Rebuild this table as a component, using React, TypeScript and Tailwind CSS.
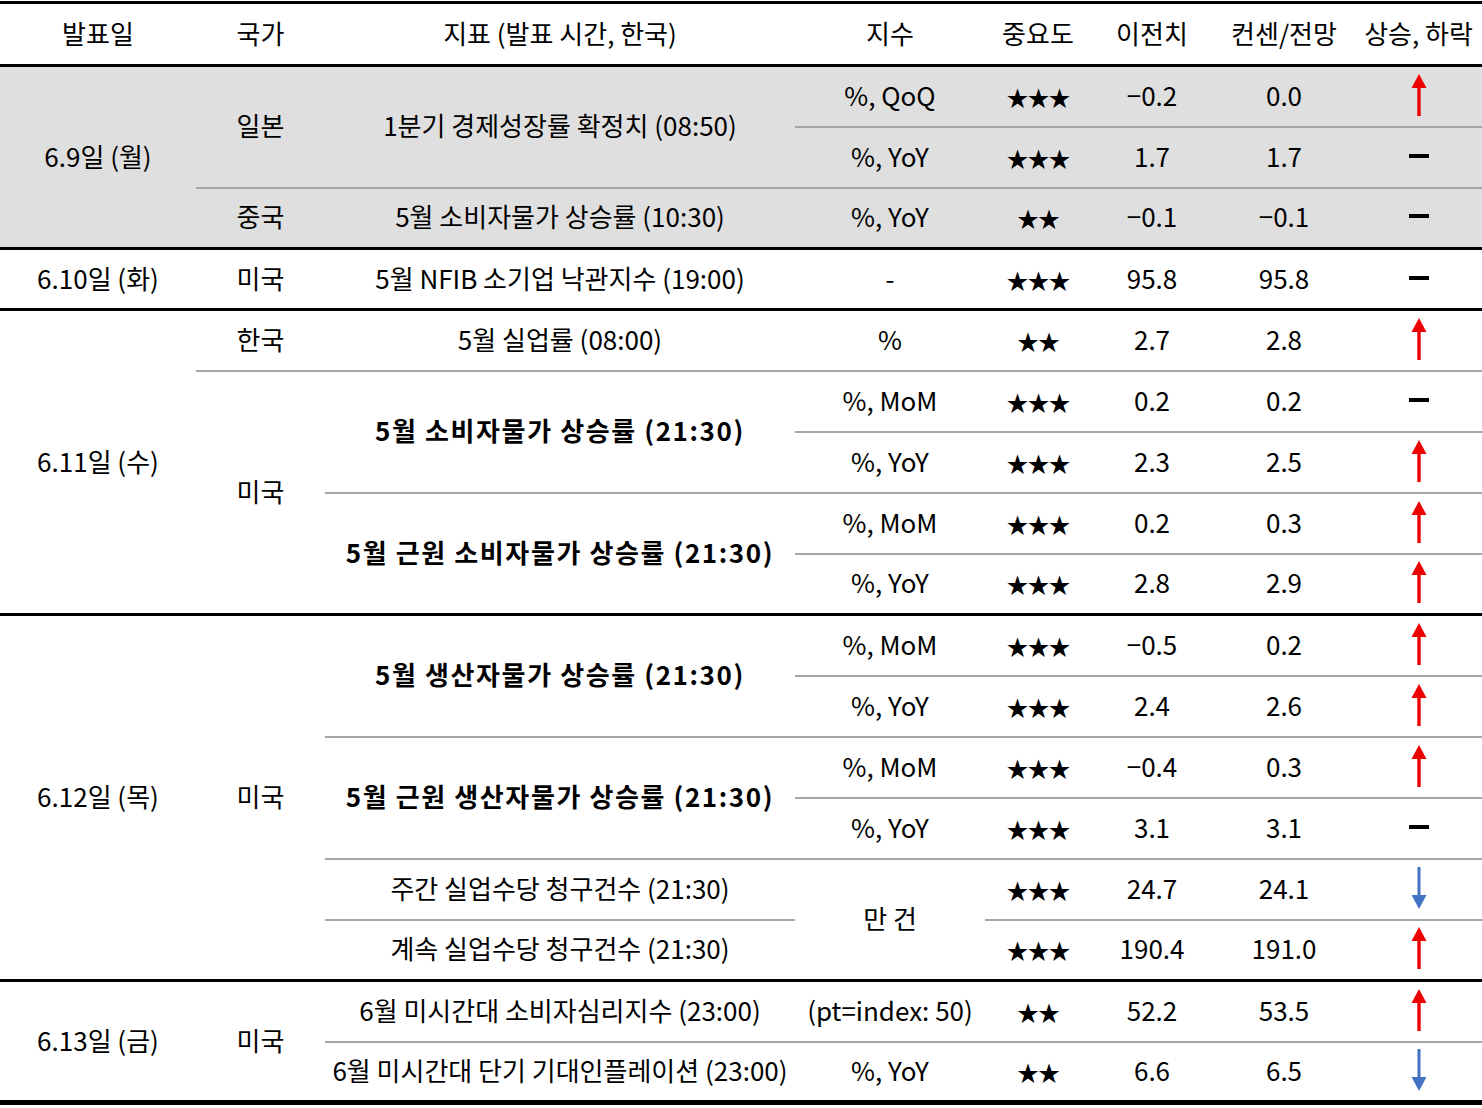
import React from "react";

type Border = "thin" | "thick" | "bottom" | "none";

const borderCls: Record<Border, string> = {
  thin: "border-b-2 border-b-[#a6a6a6]",
  thick: "border-b-[3px] border-b-black",
  bottom: "border-b-[5px] border-b-black",
  none: "",
};

interface TdProps {
  children?: React.ReactNode;
  rs?: number;
  b?: Border;
  bold?: boolean;
}

const Td = ({ children, rs, b = "none", bold }: TdProps) => (
  <td
    rowSpan={rs}
    className={`p-0 pb-[3px] text-center align-middle whitespace-nowrap ${borderCls[b]} ${bold ? "font-bold tracking-[1.6px]" : ""}`}
  >
    {children}
  </td>
);

const Up = () => (
  <svg width="16" height="42" viewBox="0 0 16 42" className="mx-auto block">
    <rect x="6.3" y="11" width="3.4" height="31" fill="#ee0000" />
    <polygon points="8,0 15.5,14 0.5,14" fill="#ee0000" />
  </svg>
);

const Down = () => (
  <svg width="16" height="42" viewBox="0 0 16 42" className="mx-auto block">
    <rect x="6.5" y="0" width="3" height="31" fill="#4472c4" />
    <polygon points="8,42 15.5,28 0.5,28" fill="#4472c4" />
  </svg>
);

const Flat = () => <div className="mx-auto h-[4px] w-[20px] bg-black" />;

const Stars = ({ n }: { n: number }) => (
  <span className="text-[22px] tracking-[-1px]">{"★".repeat(n)}</span>
);

type Trend = "up" | "down" | "flat";
const trendIcon = (t: Trend) => (t === "up" ? <Up /> : t === "down" ? <Down /> : <Flat />);

// 지수 ~ 상승,하락 cells (unit column left out when spanned by a previous row)
const Vals = ({
  unit,
  stars,
  prev,
  cons,
  trend,
  b,
}: {
  unit?: string;
  stars: number;
  prev: string;
  cons: string;
  trend: Trend;
  b: Border;
}) => (
  <>
    {unit !== undefined && <Td b={b}>{unit}</Td>}
    <Td b={b}>
      <Stars n={stars} />
    </Td>
    <Td b={b}>{prev}</Td>
    <Td b={b}>{cons}</Td>
    <Td b={b}>{trendIcon(trend)}</Td>
  </>
);

export default function App() {
  return (
    <div className="w-[1482px] bg-white pt-[1px] text-black [font-family:'Noto_Sans_CJK_KR','Noto_Sans',sans-serif]">
      <table className="w-full table-fixed border-collapse border-t-[3px] border-t-black text-[26px] leading-none">
        <colgroup>
          <col className="w-[196px]" />
          <col className="w-[129px]" />
          <col className="w-[470px]" />
          <col className="w-[190px]" />
          <col className="w-[106px]" />
          <col className="w-[122px]" />
          <col className="w-[142px]" />
          <col className="w-[127px]" />
        </colgroup>
        <thead>
          <tr className="h-[63px]">
            {["발표일", "국가", "지표 (발표 시간, 한국)", "지수", "중요도", "이전치", "컨센/전망", "상승, 하락"].map((h) => (
              <Td key={h} b="thick">
                {h}
              </Td>
            ))}
          </tr>
        </thead>
        <tbody>
          {/* 6.9 - gray group */}
          <tr className="h-[61px] bg-[#dfdfdf]">
            <Td rs={3} b="thick">6.9일 (월)</Td>
            <Td rs={2} b="thin">일본</Td>
            <Td rs={2} b="thin">1분기 경제성장률 확정치 (08:50)</Td>
            <Vals unit="%, QoQ" stars={3} prev="−0.2" cons="0.0" trend="up" b="thin" />
          </tr>
          <tr className="h-[61px] bg-[#dfdfdf]">
            <Vals unit="%, YoY" stars={3} prev="1.7" cons="1.7" trend="flat" b="thin" />
          </tr>
          <tr className="h-[61px] bg-[#dfdfdf]">
            <Td b="thick">중국</Td>
            <Td b="thick">5월 소비자물가 상승률 (10:30)</Td>
            <Vals unit="%, YoY" stars={2} prev="−0.1" cons="−0.1" trend="flat" b="thick" />
          </tr>

          {/* 6.10 */}
          <tr className="h-[61px]">
            <Td b="thick">6.10일 (화)</Td>
            <Td b="thick">미국</Td>
            <Td b="thick">5월 NFIB 소기업 낙관지수 (19:00)</Td>
            <Vals unit="-" stars={3} prev="95.8" cons="95.8" trend="flat" b="thick" />
          </tr>

          {/* 6.11 */}
          <tr className="h-[61px]">
            <Td rs={5} b="thick">6.11일 (수)</Td>
            <Td b="thin">한국</Td>
            <Td b="thin">5월 실업률 (08:00)</Td>
            <Vals unit="%" stars={2} prev="2.7" cons="2.8" trend="up" b="thin" />
          </tr>
          <tr className="h-[61px]">
            <Td rs={4} b="thick">미국</Td>
            <Td rs={2} b="thin" bold>5월 소비자물가 상승률 (21:30)</Td>
            <Vals unit="%, MoM" stars={3} prev="0.2" cons="0.2" trend="flat" b="thin" />
          </tr>
          <tr className="h-[61px]">
            <Vals unit="%, YoY" stars={3} prev="2.3" cons="2.5" trend="up" b="thin" />
          </tr>
          <tr className="h-[61px]">
            <Td rs={2} b="thick" bold>5월 근원 소비자물가 상승률 (21:30)</Td>
            <Vals unit="%, MoM" stars={3} prev="0.2" cons="0.3" trend="up" b="thin" />
          </tr>
          <tr className="h-[61px]">
            <Vals unit="%, YoY" stars={3} prev="2.8" cons="2.9" trend="up" b="thick" />
          </tr>

          {/* 6.12 */}
          <tr className="h-[61px]">
            <Td rs={6} b="thick">6.12일 (목)</Td>
            <Td rs={6} b="thick">미국</Td>
            <Td rs={2} b="thin" bold>5월 생산자물가 상승률 (21:30)</Td>
            <Vals unit="%, MoM" stars={3} prev="−0.5" cons="0.2" trend="up" b="thin" />
          </tr>
          <tr className="h-[61px]">
            <Vals unit="%, YoY" stars={3} prev="2.4" cons="2.6" trend="up" b="thin" />
          </tr>
          <tr className="h-[61px]">
            <Td rs={2} b="thin" bold>5월 근원 생산자물가 상승률 (21:30)</Td>
            <Vals unit="%, MoM" stars={3} prev="−0.4" cons="0.3" trend="up" b="thin" />
          </tr>
          <tr className="h-[61px]">
            <Vals unit="%, YoY" stars={3} prev="3.1" cons="3.1" trend="flat" b="thin" />
          </tr>
          <tr className="h-[61px]">
            <Td b="thin">주간 실업수당 청구건수 (21:30)</Td>
            <Td rs={2} b="thick">만 건</Td>
            <Vals stars={3} prev="24.7" cons="24.1" trend="down" b="thin" />
          </tr>
          <tr className="h-[61px]">
            <Td b="thick">계속 실업수당 청구건수 (21:30)</Td>
            <Vals stars={3} prev="190.4" cons="191.0" trend="up" b="thick" />
          </tr>

          {/* 6.13 */}
          <tr className="h-[61px]">
            <Td rs={2} b="bottom">6.13일 (금)</Td>
            <Td rs={2} b="bottom">미국</Td>
            <Td b="thin">6월 미시간대 소비자심리지수 (23:00)</Td>
            <Vals unit="(pt=index: 50)" stars={2} prev="52.2" cons="53.5" trend="up" b="thin" />
          </tr>
          <tr className="h-[61px]">
            <Td b="bottom">6월 미시간대 단기 기대인플레이션 (23:00)</Td>
            <Vals unit="%, YoY" stars={2} prev="6.6" cons="6.5" trend="down" b="bottom" />
          </tr>
        </tbody>
      </table>
    </div>
  );
}
